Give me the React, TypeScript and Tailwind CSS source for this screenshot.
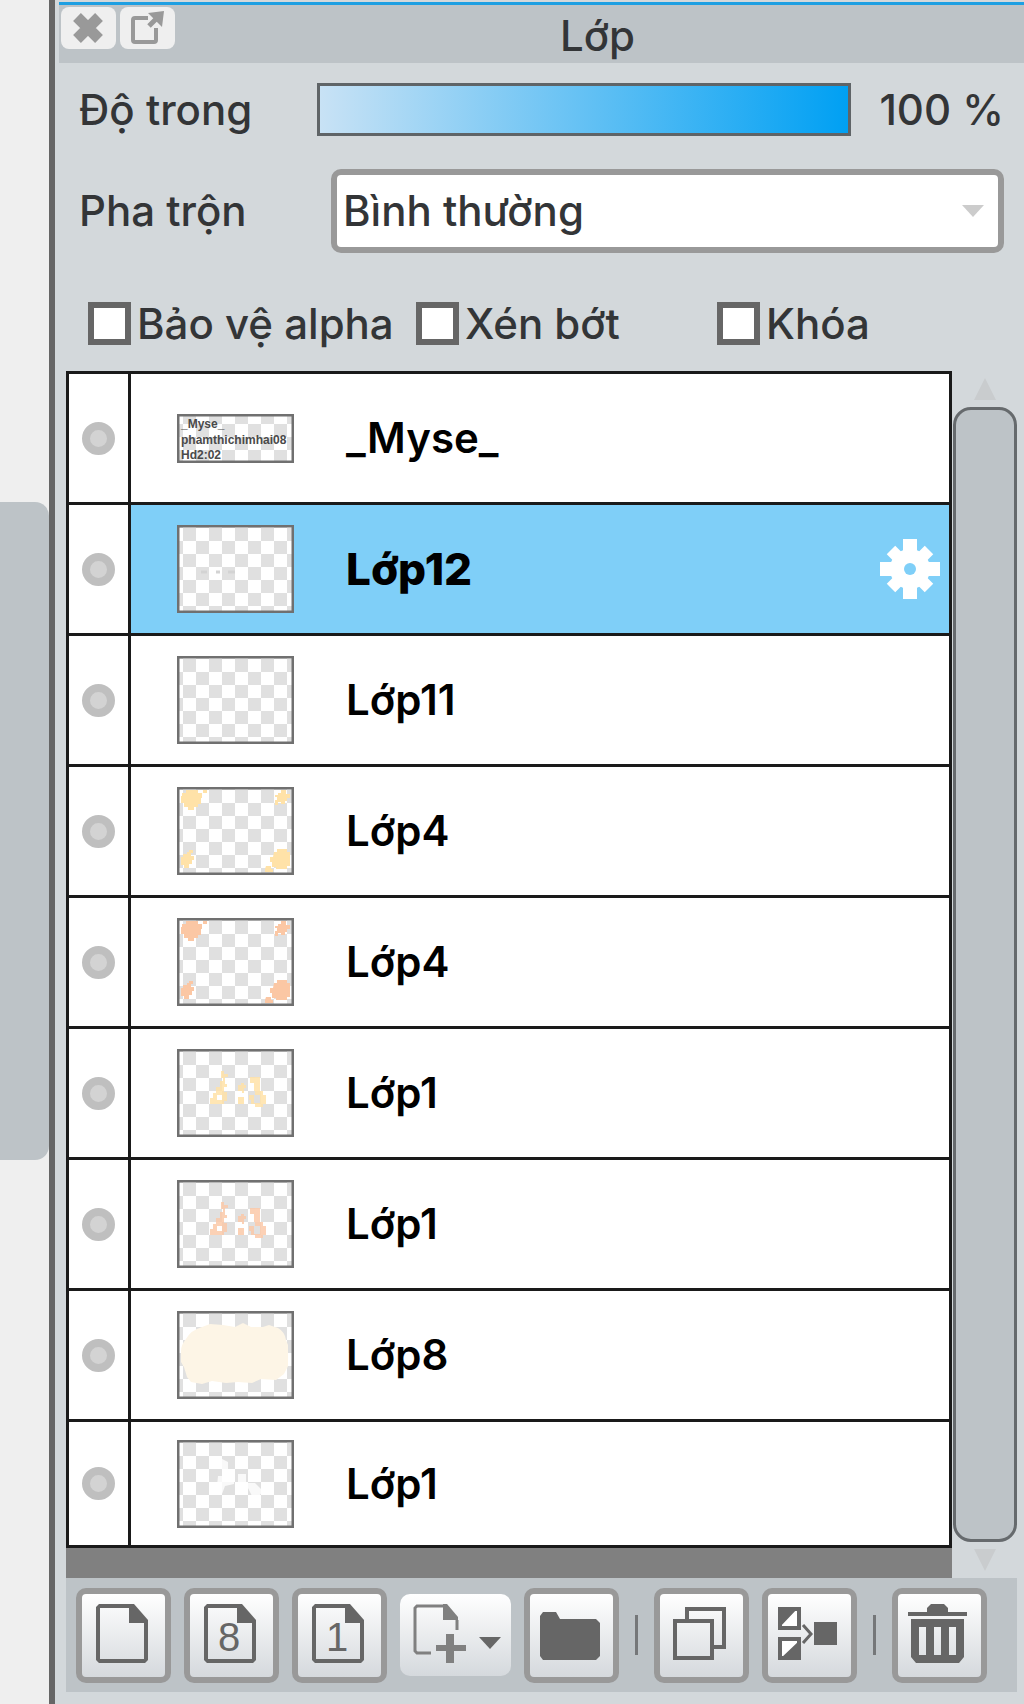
import { useState } from 'react';
import type { ReactNode } from 'react';

type Art = 'text' | 'dots' | 'none' | 'yellowCorners' | 'orangeCorners' | 'yellowFace' | 'orangeFace' | 'blob' | 'white';

interface Layer {
    id: number;
    name: string;
    art: Art;
}

const layers: Layer[] = [
    { id: 1, name: '_Myse_', art: 'text' },
    { id: 2, name: 'Lớp12', art: 'dots' },
    { id: 3, name: 'Lớp11', art: 'none' },
    { id: 4, name: 'Lớp4', art: 'yellowCorners' },
    { id: 5, name: 'Lớp4', art: 'orangeCorners' },
    { id: 6, name: 'Lớp1', art: 'yellowFace' },
    { id: 7, name: 'Lớp1', art: 'orangeFace' },
    { id: 8, name: 'Lớp8', art: 'blob' },
    { id: 9, name: 'Lớp1', art: 'white' }
];

function Corners({ color }: { color: string }) {
    return (
        <g fill={color}>
            <path d="M5 6h4V3h12v3h4v5h-1v6h-3v3h-4v3h-6v-3H7v-4H4V9h1z" />
            <path d="M26 3h4v3h-4zM101 6h3V3h5v4h4v4h-3v3h-2v3h-4v-2h-3v3h-3v-5h2v-3h-2V8h3z" />
            <path d="M12 63h4v3h-2v3h3v4h-2v4h-3v4H7v-3H4v-8h2v-3h4v-2h2z" />
            <path d="M97 65h3v-3h10v3h3v14h-3v3H99v-2h-4v-5h-2v-5h3zM89 79h5v3h2v3h-8v-3z" />
        </g>
    );
}

function Face({ color }: { color: string }) {
    return (
        <g fill={color} fillRule="evenodd" opacity={0.85}>
            <path d="M44 22h3v3h4v3h-3v7h2v3h-3v5h3v9h-3v3H33v-6h3v-5h3v-6h4v-6h3v-3h-2zM40 46v5h5v-5z" />
            <path d="M61 36h3v-2h3v2h2v3h-2v5h-2v-2h-4zM61 48h6v7h-6z" />
            <path d="M73 28h10v14h3v4h3v9h-3v3h-8v-3h-4v-4h-2v-5h6v-4h-1v-8h-4zM77 46v8h6v-8z" />
        </g>
    );
}

function Thumbnail({ art, id }: { art: Art; id: number }) {
    const height = art === 'text' ? 49 : 88;
    const pattern = `checker-${id}`;

    return (
        <svg width={117} height={height} viewBox={`0 0 117 ${height}`} className="shrink-0">
            <defs>
                <pattern id={pattern} x={6} y={art === 'text' ? -3 : 3} width={26} height={26} patternUnits="userSpaceOnUse">
                    <rect width={26} height={26} fill="#ffffff" />
                    <rect width={13} height={13} fill="#e0e0e0" />
                    <rect x={13} y={13} width={13} height={13} fill="#e0e0e0" />
                </pattern>
            </defs>
            <rect width={117} height={height} fill={`url(#${pattern})`} />
            {art === 'text' && (
                <g fontFamily="Liberation Sans, Arial, sans-serif" fontSize={12} fontWeight={700} fill="#4a4a4a">
                    <text x={4} y={14}>_Myse_</text>
                    <text x={4} y={30}>phamthichimhai08</text>
                    <text x={4} y={45}>Hd2:02</text>
                </g>
            )}
            {art === 'dots' && <path d="M24 47h6M39 47h4M51 47h7" stroke="#d3d3d3" strokeWidth={3} />}
            {art === 'yellowCorners' && <Corners color="#ffe2a8" />}
            {art === 'orangeCorners' && <Corners color="#fbc7a4" />}
            {art === 'yellowFace' && <Face color="#ffe2a8" />}
            {art === 'orangeFace' && <Face color="#fbc9a9" />}
            {art === 'blob' && (
                <path d="M4 40q0-6 5-12 5-9 16-12l8-3 13 1 12 2 8-4 8 4h12l6-2 9 3q7 4 8 12l2 5v21l-4 8-8 6-15-1-9 4-14-1-12 1-14-2-10 3-11-2-4-5-3-10-3-5z" fill="#fdf5e6" />
            )}
            {art === 'white' && (
                <path d="M43 18l8 4v10h6v12l-9 2-3 8h-10v-8h5l1-10h5zM61 34h8v9h9l8 8-4 5h-7l-4-8-10 2z" fill="#ffffff" opacity={0.8} />
            )}
            <rect x={1} y={1} width={115} height={height - 2} fill="none" stroke="#707070" strokeWidth={3} />
        </svg>
    );
}

function GearIcon() {
    return (
        <svg width={60} height={60} viewBox="0 0 60 60" className="shrink-0">
            <path d="M23 0h14v60H23zM0 23h60v14H0z" fill="#ffffff" />
            <path d="M11 11l38 38M49 11L11 49" stroke="#ffffff" strokeWidth={12} />
            <circle cx={30} cy={30} r={20} fill="#ffffff" />
            <circle cx={30} cy={30} r={6} fill="#7fcff8" />
        </svg>
    );
}

function PageIcon({ digit }: { digit?: string }) {
    return (
        <svg width={83} height={83} viewBox="6 6 83 83">
            <path d="M23 16h33v4H24v51h44V34h4v38l-3 3H23l-3-3V19z" fill="#666666" />
            <path d="M53 16h5l14 16v3H53z" fill="#666666" />
            {digit && (
                <text x={45} y={63} textAnchor="middle" fontSize={40} fontFamily="Liberation Sans, Arial, sans-serif" fill="#666666">
                    {digit}
                </text>
            )}
        </svg>
    );
}

function ToolButton({ label, children }: { label: string; children: ReactNode }) {
    return (
        <button
            aria-label={label}
            className="h-[95px] w-[95px] shrink-0 rounded-[10px] border-[6px] border-[#999999] bg-linear-to-b from-white to-[#d5d9dd]"
        >
            {children}
        </button>
    );
}

function Separator() {
    return <div className="mx-[3px] h-10 w-[3px] shrink-0 bg-[#757779]" />;
}

function Check({ label }: { label: string }) {
    return (
        <label className="flex items-center gap-[6px] whitespace-nowrap">
            <input type="checkbox" className="h-[43px] w-[43px] shrink-0 appearance-none border-[6px] border-[#666666] bg-white checked:bg-[#666666]" />
            {label}
        </label>
    );
}

export default function App() {
    const [selected, setSelected] = useState(2);
    const [opacity, setOpacity] = useState(100);

    return (
        <div className="flex min-h-screen bg-[#d3d8db] font-['Inter',sans-serif] text-[42px] font-medium leading-[42px] text-[#333537]">
            <aside className="w-[49px] shrink-0 bg-[#efefef] pt-[502px]">
                <div className="h-[658px] rounded-r-[14px] bg-[#bdc3c7]" />
            </aside>

            <main className="min-w-0 flex-1 border-l-[6px] border-[#666666] pl-1 pt-[2px]">
                <header className="flex h-[61px] border-t-[3px] border-[#1e9fe2] bg-[#bdc3c7] pl-[2px] pt-[2px]">
                    <button aria-label="Đóng" className="h-[42px] w-[55px] rounded-lg bg-[#efefef]">
                        <svg width={55} height={42} viewBox="0 0 55 42">
                            <path d="M16 10l22 22M38 10L16 32" stroke="#999999" strokeWidth={11} />
                        </svg>
                    </button>
                    <button aria-label="Tách cửa sổ" className="ml-1 h-[42px] w-[55px] rounded-lg bg-[#efefef]">
                        <svg width={55} height={42} viewBox="0 0 55 42">
                            <path d="M28 11H15q-2 0-2 2v20q0 2 2 2h19q2 0 2-2V21" fill="none" stroke="#999999" strokeWidth={4} />
                            <path d="M29 19l9-9" stroke="#999999" strokeWidth={5} />
                            <path d="M28 6l16-2-2 16z" fill="#999999" />
                        </svg>
                    </button>
                    <h1 className="flex-1 pr-1 pt-2 text-center">Lớp</h1>
                </header>

                <section className="px-5 pt-5">
                    <div className="flex items-center">
                        <label htmlFor="opacity" className="w-[238px] whitespace-nowrap">Độ trong</label>
                        <input
                            id="opacity"
                            type="range"
                            value={opacity}
                            onChange={(e) => setOpacity(Number(e.target.value))}
                            className="h-[53px] min-w-0 flex-1 appearance-none border-[3px] border-[#5f6467] bg-linear-to-r/srgb from-[#c8e2f5] to-[#00a0f3] [&::-webkit-slider-thumb]:appearance-none"
                        />
                        <output htmlFor="opacity" className="w-[153px] whitespace-nowrap text-right">{opacity} %</output>
                    </div>

                    <div className="mt-[33px] flex items-center">
                        <label htmlFor="blend" className="w-[252px] whitespace-nowrap">Pha trộn</label>
                        <div className="relative min-w-0 flex-1">
                            <select id="blend" className="block h-[84px] w-full appearance-none rounded-[10px] border-[6px] border-[#999999] bg-white pl-[6px] leading-[60px]">
                                <option>Bình thường</option>
                            </select>
                            <svg width={22} height={12} viewBox="0 0 22 12" className="pointer-events-none absolute right-5 top-9">
                                <path d="M0 0h22L11 12z" fill="#cccccc" />
                            </svg>
                        </div>
                    </div>

                    <div className="mt-[49px] grid grid-cols-[328px_301px_1fr] pl-[9px]">
                        <Check label="Bảo vệ alpha" />
                        <Check label="Xén bớt" />
                        <Check label="Khóa" />
                    </div>
                </section>

                <section className="ml-[7px] mr-[7px] mt-[26px] flex">
                    <div className="min-w-0 flex-1 bg-[#808080] pb-[30px]">
                        <ul className="border-x-[3px] border-t-[3px] border-[#1a1a1a] bg-white">
                            {layers.map((layer) => (
                                <li key={layer.id} className="flex h-[131px] border-b-[3px] border-[#1a1a1a] last:h-[126px]">
                                    <button aria-label="Hiện lớp" className="flex w-[62px] shrink-0 items-center justify-center border-r-[3px] border-[#1a1a1a]">
                                        <span className="h-[33px] w-[33px] rounded-full border-8 border-[#bfbfbf] bg-[#d3d3d3]" />
                                    </button>
                                    <button
                                        onClick={() => setSelected(layer.id)}
                                        className={`flex min-w-0 flex-1 items-center pl-[46px] pr-[9px] text-left text-black ${
                                            layer.id === selected ? 'bg-[#7fcff8] text-[44px] font-extrabold' : 'font-semibold'
                                        }`}
                                    >
                                        <Thumbnail art={layer.art} id={layer.id} />
                                        <span className="flex-1 pl-[52px]">{layer.name}</span>
                                        {layer.id === selected && <GearIcon />}
                                    </button>
                                </li>
                            ))}
                        </ul>
                    </div>
                    <div className="flex w-[65px] flex-col pl-px">
                        <button aria-label="Cuộn lên" className="flex h-9 items-center justify-center">
                            <svg width={22} height={22} viewBox="0 0 22 22">
                                <path d="M11 0l11 22H0z" fill="#c9ccce" />
                            </svg>
                        </button>
                        <div className="flex-1 rounded-[18px] border-[3px] border-[#666a6d] bg-[#bdc3c7]" />
                        <button aria-label="Cuộn xuống" className="flex h-9 items-center justify-center">
                            <svg width={22} height={22} viewBox="0 0 22 22">
                                <path d="M0 0h22L11 22z" fill="#c9ccce" />
                            </svg>
                        </button>
                    </div>
                </section>

                <footer className="ml-[7px] mr-[7px] flex h-[114px] items-center gap-[13px] bg-[#bdc3c7] pl-[10px]">
                    <ToolButton label="Thêm lớp">
                        <PageIcon />
                    </ToolButton>
                    <ToolButton label="Thêm lớp 8 bit">
                        <PageIcon digit="8" />
                    </ToolButton>
                    <ToolButton label="Thêm lớp 1 bit">
                        <PageIcon digit="1" />
                    </ToolButton>
                    <button aria-label="Thêm lớp khác" className="h-[82px] w-[111px] shrink-0 rounded-[10px] bg-linear-to-b from-white to-[#d5d9dd]">
                        <svg width={111} height={82} viewBox="0 0 111 82">
                            <path d="M44 12H17l-2 2v43l2 2h14M57 26v10" fill="none" stroke="#808080" strokeWidth={3} />
                            <path d="M43 10h4l11 13v3H43z" fill="#808080" />
                            <path d="M46 40h8v11h12v6H54v12h-8V57H36v-6h10z" fill="#808080" />
                            <path d="M79 43h22L90 55z" fill="#666666" />
                        </svg>
                    </button>
                    <ToolButton label="Thư mục mới">
                        <svg width={83} height={83} viewBox="6 6 83 83">
                            <path d="M19 24h13l4 7h36l4 4v33l-4 4H19l-3-4V28z" fill="#666666" />
                        </svg>
                    </ToolButton>
                    <Separator />
                    <ToolButton label="Nhân đôi lớp">
                        <svg width={83} height={83} viewBox="6 6 83 83">
                            <path d="M33 31V21h37v38H60" fill="none" stroke="#666666" strokeWidth={4} />
                            <path d="M21 33h37v37H21z" fill="none" stroke="#666666" strokeWidth={4} />
                        </svg>
                    </ToolButton>
                    <ToolButton label="Gộp lớp">
                        <svg width={83} height={83} viewBox="6 6 83 83">
                            <path d="M18 21h19v19H18zM18 51h19v19H18z" fill="#ffffff" stroke="#666666" strokeWidth={4} />
                            <path d="M17 20h19L17 40zM38 52v19H18z" fill="#666666" />
                            <path d="M41 37l8 9-8 9" fill="none" stroke="#666666" strokeWidth={3} />
                            <path d="M52 34h23v23H52z" fill="#666666" />
                        </svg>
                    </ToolButton>
                    <Separator />
                    <ToolButton label="Xóa lớp">
                        <svg width={83} height={83} viewBox="6 6 83 83">
                            <path d="M16 24h19v-4l4-4h13l4 4v4h19v4H16z" fill="#666666" />
                            <path d="M19 31h53v38l-5 6H24l-5-6zM27 39v28h7V39zM42 39v28h7V39zM57 39v28h7V39z" fill="#666666" fillRule="evenodd" />
                        </svg>
                    </ToolButton>
                </footer>
            </main>
        </div>
    );
}
